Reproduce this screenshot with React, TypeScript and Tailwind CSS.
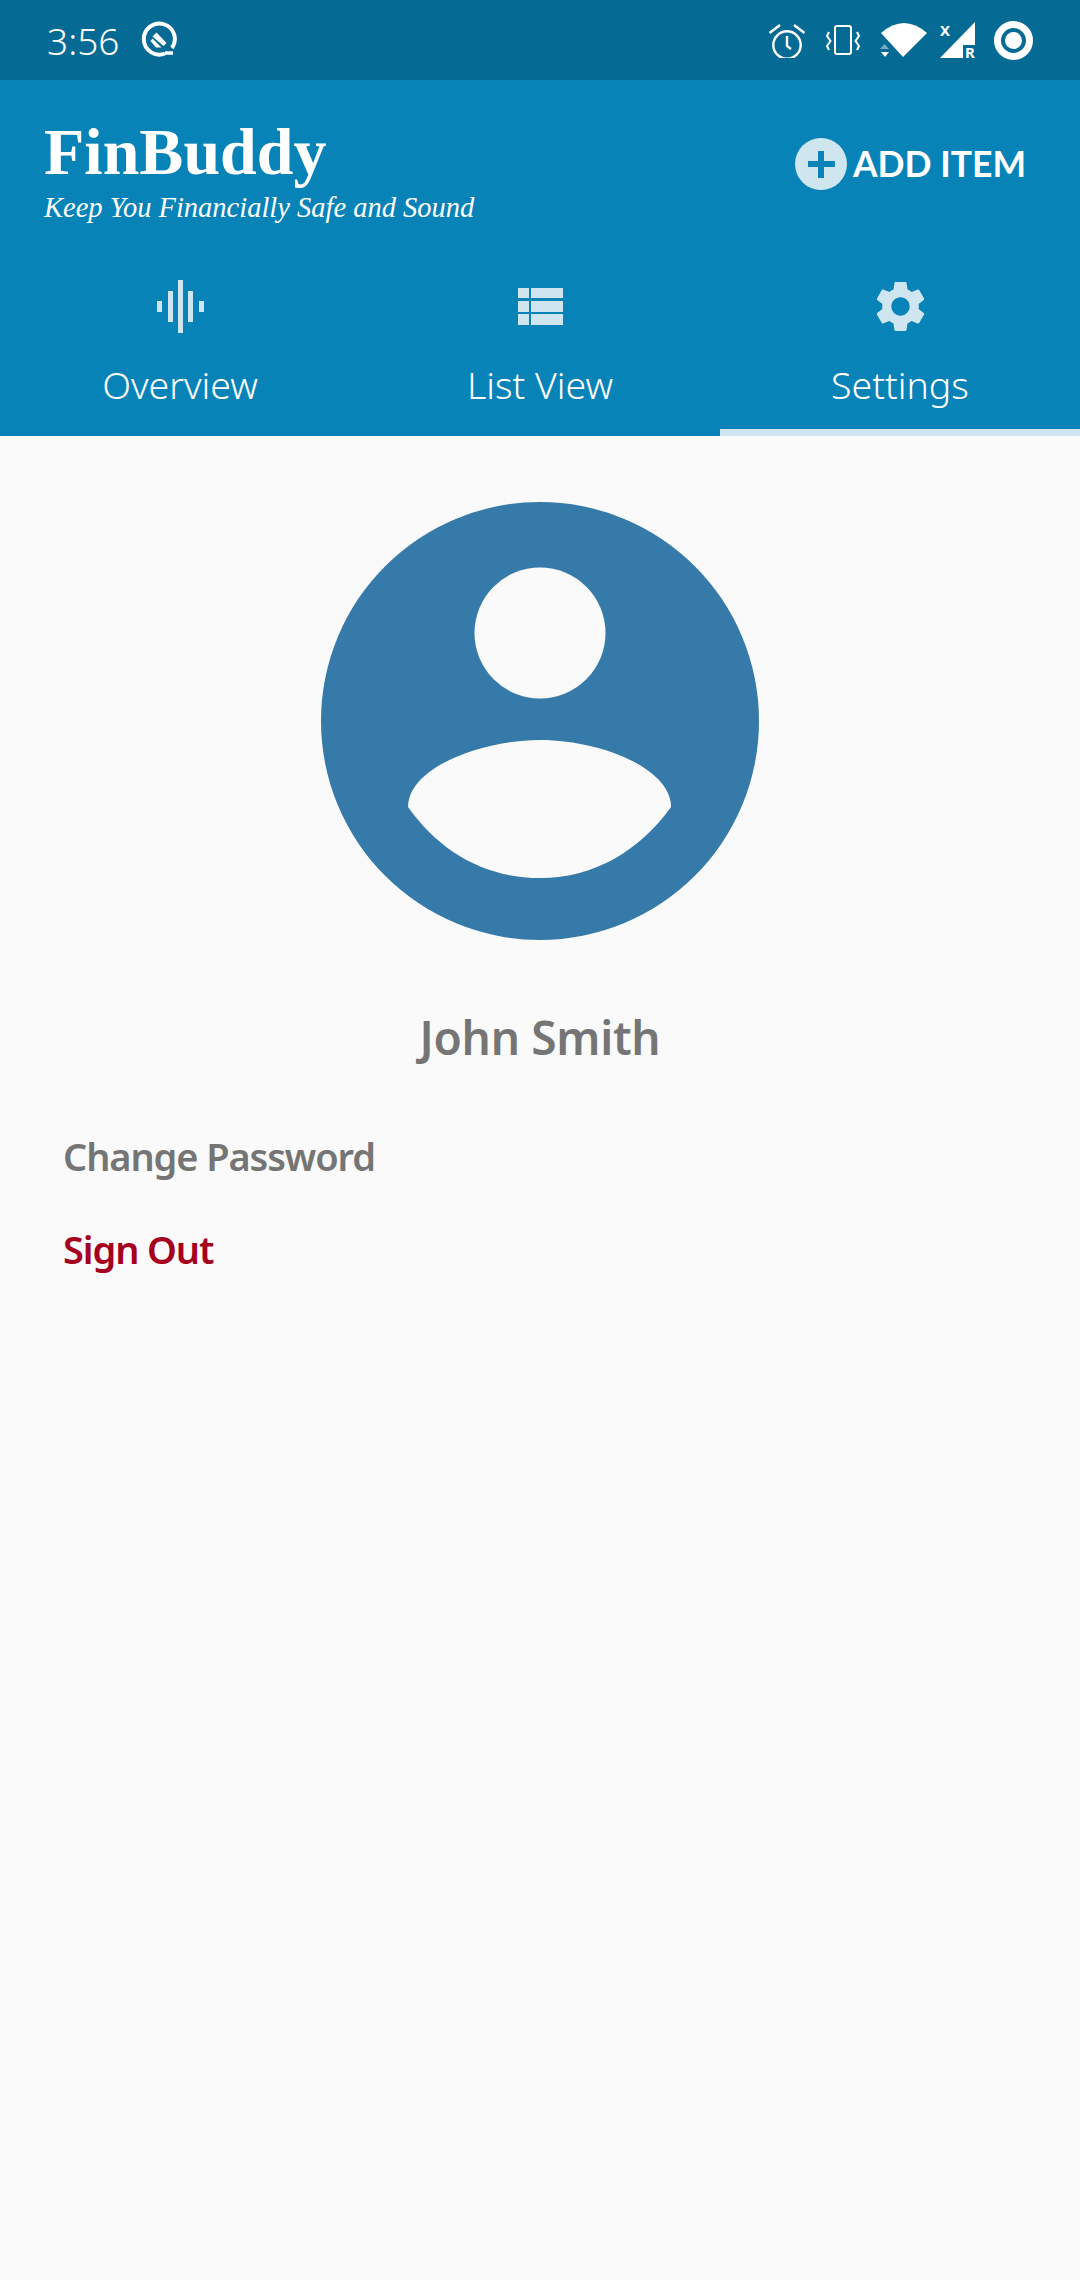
const ICON = '#cfe6f1'

function QIcon() {
  return (
    <svg width="40" height="40" viewBox="0 0 40 40" fill="none">
      <path d="M26 33.5 A15.5 15.5 0 1 1 33 28" stroke="white" strokeWidth="4" />
      <path d="M17.5 12.5 L27.5 23 L24.5 26 L13.5 16.5 Z" fill="white" />
      <path d="M11.5 21 L13.5 18.5 L22.5 27.5 L17 27.5 Z" fill="white" />
      <path d="M26 33 L34 33" stroke="white" strokeWidth="3.5" />
    </svg>
  )
}

function AlarmIcon() {
  return (
    <svg width="36" height="36" viewBox="0 0 36 36" fill="none" stroke="white" strokeWidth="2.4">
      <circle cx="18" cy="23" r="13.7" />
      <path d="M18 14 V24 L22 27" />
      <path d="M0.5 11 L11 3 M25 3 L35.5 11" />
    </svg>
  )
}

function VibrateIcon() {
  return (
    <svg width="34" height="36" viewBox="0 0 34 36" fill="none" stroke="white" strokeWidth="2">
      <rect x="9" y="4" width="16" height="28" rx="2" />
      <path d="M3 10 L1 14 L4.5 19 L1 24 L3 28" />
      <path d="M31 10 L33 14 L29.5 19 L33 24 L31 28" />
    </svg>
  )
}

function WifiIcon() {
  return (
    <svg width="47" height="36" viewBox="0 0 47 36" fill="white">
      <path d="M1 11 Q24 -9 47 11 L23 35 Z" />
      <path d="M0 27 L9 27 L4.5 22 Z" opacity="0.45" />
      <path d="M1 30 L9 30 L5 35 Z" />
    </svg>
  )
}

function SignalIcon() {
  return (
    <div className="relative h-[36px] w-[36px]">
      <svg width="36" height="36" viewBox="0 0 36 36" fill="white">
        <path d="M35 0 V23 H23 V36 H0 Z" />
      </svg>
      <span className="absolute left-0 top-[2px] font-['Noto_Sans'] text-[15px] font-bold leading-[12px] text-white">X</span>
      <span className="absolute left-[25px] top-[24px] font-['Noto_Sans'] text-[15px] font-bold leading-[12px] text-white">R</span>
    </div>
  )
}

function StatusBar() {
  return (
    <div className="flex h-[80px] items-center justify-between bg-[#066b94] pl-[47px] pr-[47px]">
      <div className="flex items-center gap-[20px]">
        <span className="font-['Noto_Sans'] text-[37px] font-light leading-none text-white">3:56</span>
        <QIcon />
      </div>
      <div className="flex items-center">
        <AlarmIcon />
        <div className="ml-[21px]"><VibrateIcon /></div>
        <div className="ml-[20px]"><WifiIcon /></div>
        <div className="ml-[13px]"><SignalIcon /></div>
        <div className="ml-[18px] flex h-[39px] w-[39px] items-center justify-center rounded-full border-[7px] border-white">
          <div className="h-[17px] w-[17px] rounded-full bg-white" />
        </div>
      </div>
    </div>
  )
}

function OverviewIcon() {
  return (
    <svg width="47" height="53" viewBox="0 0 47 53" fill={ICON}>
      <rect x="0" y="21" width="5" height="11" />
      <rect x="11" y="11" width="5" height="31" />
      <rect x="21" y="0" width="5" height="53" />
      <rect x="31" y="11" width="5" height="31" />
      <rect x="42" y="21" width="5" height="11" />
    </svg>
  )
}

function ListIcon() {
  return (
    <svg width="45" height="37" viewBox="0 0 45 37" fill={ICON}>
      <rect x="0" y="0" width="11" height="10" />
      <rect x="13" y="0" width="32" height="10" />
      <rect x="0" y="13" width="11" height="11" />
      <rect x="13" y="13" width="32" height="11" />
      <rect x="0" y="26" width="11" height="11" />
      <rect x="13" y="26" width="32" height="11" />
    </svg>
  )
}

function GearIcon() {
  return (
    <svg width="61" height="61" viewBox="0 0 24 24" fill={ICON}>
      <path d="M19.14 12.94c.04-.3.06-.61.06-.94 0-.32-.02-.64-.07-.94l2.03-1.58c.18-.14.23-.41.12-.61l-1.92-3.32c-.12-.22-.37-.29-.59-.22l-2.39.96c-.5-.38-1.03-.7-1.62-.94l-.36-2.54c-.04-.24-.24-.41-.48-.41h-3.84c-.24 0-.43.17-.47.41l-.36 2.54c-.59.24-1.13.57-1.62.94l-2.39-.96c-.22-.08-.47 0-.59.22L2.74 8.87c-.12.21-.08.47.12.61l2.03 1.58c-.05.3-.09.63-.09.94s.02.64.07.94l-2.03 1.58c-.18.14-.23.41-.12.61l1.92 3.32c.12.22.37.29.59.22l2.39-.96c.5.38 1.03.7 1.62.94l.36 2.54c.05.24.24.41.48.41h3.84c.24 0 .44-.17.47-.41l.36-2.54c.59-.24 1.13-.56 1.62-.94l2.39.96c.22.08.47 0 .59-.22l1.92-3.32c.12-.22.07-.47-.12-.61l-2.01-1.58zM12 15.6c-1.98 0-3.6-1.62-3.6-3.6s1.62-3.6 3.6-3.6 3.6 1.62 3.6 3.6-1.62 3.6-3.6 3.6z" />
    </svg>
  )
}

function Header() {
  return (
    <div className="flex h-[176px] items-start justify-between pl-[44px] pr-[54px] pt-[39px]">
      <div>
        <div className="font-['Liberation_Serif'] text-[66px] font-bold leading-[66px] text-white">FinBuddy</div>
        <div className="mt-[5px] font-['Liberation_Serif'] text-[28.5px] italic leading-[36px] text-white">Keep You Financially Safe and Sound</div>
      </div>
      <div className="mt-[19px] flex items-center gap-[6px]">
        <div className="relative h-[52px] w-[52px] rounded-full bg-[#cfe6f1]">
          <div className="absolute left-[13px] top-[23px] h-[6px] w-[27px] bg-[#0883b8]" />
          <div className="absolute left-[23px] top-[13px] h-[27px] w-[6px] bg-[#0883b8]" />
        </div>
        <span className="font-['Lato'] text-[35.5px] font-bold leading-none text-white">ADD ITEM</span>
      </div>
    </div>
  )
}

const tabs = [
  { label: 'Overview', icon: <OverviewIcon />, active: false },
  { label: 'List View', icon: <ListIcon />, active: false },
  { label: 'Settings', icon: <GearIcon />, active: true },
]

function Tabs() {
  return (
    <div className="grid h-[180px] grid-cols-3">
      {tabs.map((tab) => (
        <div
          key={tab.label}
          className={tab.active ? 'flex flex-col items-center border-b-[7px] border-[#cfe6f1]' : 'flex flex-col items-center'}
        >
          <div className="flex h-[100px] w-full items-center justify-center">{tab.icon}</div>
          <span className="mt-[5px] font-['Noto_Sans'] text-[37.5px] font-light leading-[48px] text-white">{tab.label}</span>
        </div>
      ))}
    </div>
  )
}

function Avatar() {
  return (
    <svg width="438" height="438" viewBox="321 502 438 438">
      <circle cx="540" cy="721" r="219" fill="#367aa9" />
      <circle cx="540" cy="633" r="65.5" fill="#fafafa" />
      <path
        d="M408 807 C408 768 480 740 540 740 C600 740 671 768 671 807 C640 850 595 878 540 878 C485 878 440 852 408 807 Z"
        fill="#fafafa"
      />
    </svg>
  )
}

export default function App() {
  return (
    <div className="flex min-h-[2280px] w-[1080px] flex-col bg-[#fafafa]">
      <StatusBar />
      <div className="bg-[#0883b8]">
        <Header />
        <Tabs />
      </div>
      <div className="flex flex-col items-center pt-[66px]">
        <Avatar />
        <div className="mt-[67px] font-['Noto_Sans'] text-[46px] font-semibold leading-[60px] tracking-[-0.3px] text-[#757575]">John Smith</div>
      </div>
      <div className="flex flex-col gap-[43px] px-[63px] pt-[64px]">
        <div className="font-['Noto_Sans'] text-[38px] font-semibold leading-[50px] tracking-[-1.1px] text-[#757575]">Change Password</div>
        <div className="font-['Noto_Sans'] text-[38px] font-semibold leading-[50px] tracking-[-1.1px] text-[#a6001f]">Sign Out</div>
      </div>
    </div>
  )
}
